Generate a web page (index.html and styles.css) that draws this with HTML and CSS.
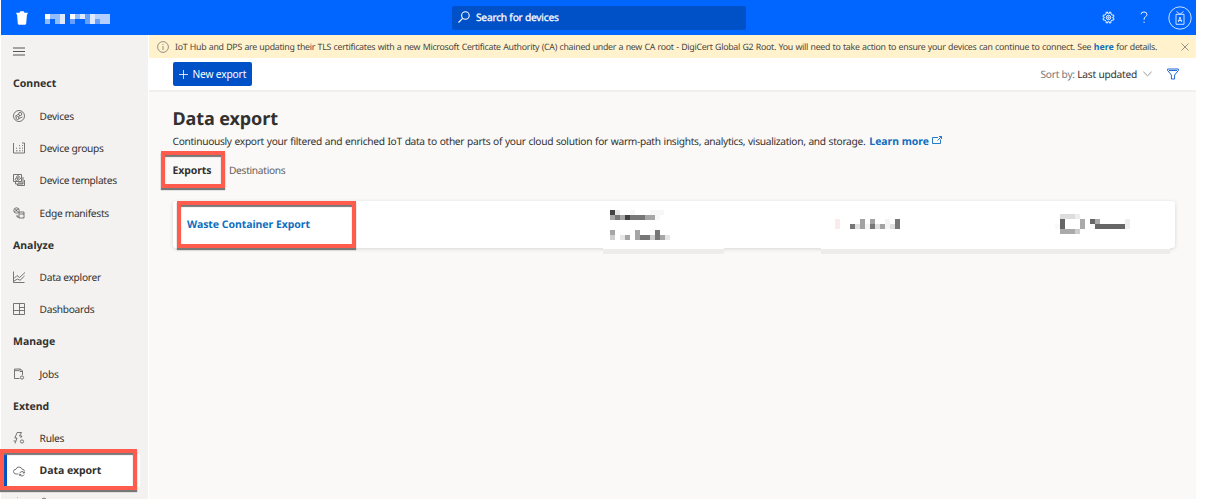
FILE: index.html
```
<!DOCTYPE html>
<html lang="en">
<head>
<meta charset="utf-8">
<title>Data export</title>
<link rel="stylesheet" href="styles.css">
</head>
<body>
<div class="app">
  <header class="topbar">
    <svg class="trash" viewBox="0 0 12 14"><path d="M.3 1.7h3.2L4.3.2h3.4l.8 1.5h3.2v1.5H.3zM1 3h10l-.8 9.5q-.1 1.3-1.3 1.3H3.1q-1.2 0-1.3-1.3z"/></svg>
    <svg class="brand" viewBox="0 0 13 2" shape-rendering="crispEdges">
      <path fill="#fff" d="M0 0h1v1H0zM5 0h1v1H5z"/><path fill="#91bcff" d="M1 0h2v1H1zM0 1h1v1H0zM6 0h1v1H6zM2 1h1v1H2z"/><path fill="#dce9ff" d="M3 0h1v1H3zM7 0h1v1H7zM9 0h1v1H9zM3 1h1v1H3zM9 1h1v1H9z"/><path fill="#66a0ff" d="M8 0h1v1H8zM5 1h1v1H5zM10 1h1v1h-1zM8 1h1v1H8z"/><path fill="#b5d0ff" d="M10 0h3v1h-3zM11 1h2v1h-2z"/>
    </svg>
    <div class="search">
      <svg class="i12" viewBox="0 0 12 12"><circle cx="7.4" cy="4.5" r="3.8"/><path d="M4.7 7.3.5 11.5"/></svg>
      <span>Search for devices</span>
    </div>
    <div class="actions">
      <svg class="gear" viewBox="0 0 14 14"><path d="m5.8 1 .3 1.5h1.8L8.2 1l1.6.6-.3 1.6 1.3 1.2 1.6-.2.6 1.7-1.4.7v.9l1.4.7-.6 1.7-1.6-.2-1.3 1.2.3 1.6-1.6.6-.3-1.5H6.1L5.8 13l-1.6-.5.3-1.6-1.3-1.2-1.6.2L1 8.200l1.400-.7v-.9L1 5.900l.6-1.700 1.600.2 1.300-1.200-.3-1.600z"/><circle cx="7" cy="7" r="2.400"/><circle cx="7" cy="7" r=".8"/></svg>
      <svg class="help" viewBox="0 0 8 14"><path d="M.8 3.500Q.9 1 4 1t3.200 2.700c0 2.300-3.100 2.600-3.100 5.200v.6M4.100 11.500v1.400"/></svg>
      <svg class="avatar" viewBox="0 0 24 24"><circle cx="12" cy="12" r="11.200"/><path d="M8 8.300h8v10H8zM8.500 5.500 12 8.300l3.500-2.800M10.300 16l1.700-5 1.700 5M10.500 14.500h3"/></svg>
    </div>
  </header>
  <div class="body">
    <nav class="sidebar">
      <svg class="menu" viewBox="0 0 12 9"><path d="M0 1h12M0 4.500h12M0 8h12"/></svg>
      <h2>Connect</h2>
      <a><svg viewBox="0 0 12 12"><circle cx="6" cy="6" r="5.500"/><circle cx="7.200" cy="4" r="1.600"/><circle cx="4.500" cy="8" r="1.500"/><path d="M2 6.500 5.700 4M5.800 8.500 9.500 7M7 5.500 5.500 6.800"/></svg><span>Devices</span></a>
      <a><svg viewBox="0 0 12 12"><path d="M.5 1v10h11V1H9M3 8.800h1.500M6 8.800h1.500M9 8.800h1M3 6.200h1M6 6.200h1.500M9 6.200h1M9 3.600h1M6 3.600h1"/></svg><span>Device groups</span></a>
      <a><svg viewBox="0 0 12 12"><path d="M.5.500h8v7h-8zM2.500 8v2h7.500V3M4.500 10v1.500h7V6"/><circle cx="5" cy="3" r="1.300"/><circle cx="3.500" cy="5.300" r="1.200"/><path d="M5 6.500 8 4M5 9h5"/></svg><span>Device templates</span></a>
      <a><svg viewBox="0 0 12 12"><circle cx="3.500" cy="3.500" r="2.700"/><path d="m1.500 4.500 4-2.500M2.500 2l2 3M6 5h5v6H6zM6.500 7H11M4 8v2h2"/></svg><span>Edge manifests</span></a>
      <h2>Analyze</h2>
      <a><svg viewBox="0 0 12 12"><path d="M.5.500v11h11M1 7.500l3-3 2.500 2L12 1.500M1 10l3.500-2L7 9.300 11.500 5"/></svg><span>Data explorer</span></a>
      <a><svg viewBox="0 0 12 12"><path d="M.5.500h11v11H.5zM6.500.500v11M.5 7.500h11M6.500 4.500h5"/></svg><span>Dashboards</span></a>
      <h2>Manage</h2>
      <a><svg viewBox="0 0 12 12"><path d="M6.500 10.500h-5V1h6l2 2v4M2 2.600h4M7 1v2.500h2.500"/><circle cx="9" cy="9.500" r="1.600"/></svg><span>Jobs</span></a>
      <h2>Extend</h2>
      <a><svg viewBox="0 0 12 12"><path d="M4.200.500h4.300L6.500 4H9L7.500 6M4.200.500 1.800 6H4L2 11.500M2.500 9H.5"/><circle cx="9" cy="9.500" r="1.600"/></svg><span>Rules</span></a>
      <a class="current"><svg viewBox="0 0 12 12"><path d="M5.500 9H3Q.5 8.800.5 6.500T3 4.300Q3.500 2 6 2t3 2.200q2.300 0 2.500 2"/><path d="M6.800 8.200Q7.300 6.500 9 6.500t2.200 1.500M11.300 6.500V8H9.800M11.200 9.500Q10.500 11 9 11t-2.200-1.500M6.700 11V9.500h1.500"/></svg><span>Data export</span></a>
      <a class="cut"><svg viewBox="0 0 12 12"><path d="M4 0h1"/></svg><span><svg viewBox="0 0 12 12"><path d="M2 2q2-2 4 0"/></svg></span></a>
    </nav>
    <main>
      <div class="banner">
        <svg class="i12" viewBox="0 0 12 12"><circle cx="6" cy="6" r="5.400"/><path d="M6 5v4M6 3v1"/></svg>
        <p>IoT Hub and DPS are updating their TLS certificates with a new Microsoft Certificate Authority (CA) chained under a new CA root - DigiCert Global G2 Root. You will need to take action to ensure your devices can continue to connect. See <b>here</b> for details.</p>
        <svg class="close" viewBox="0 0 8 8"><path d="m.5.500 7 7M7.500.500l-7 7"/></svg>
      </div>
      <div class="toolbar">
        <button><svg viewBox="0 0 9 9"><path d="M4.500 0v9M0 4.500h9"/></svg><span>New export</span></button>
        <div class="sort"><span>Sort by: <em>Last updated</em></span>
          <svg class="chev" viewBox="0 0 9 6"><path d="m.4.800 4.100 4 4.100-4"/></svg>
          <svg class="filter" viewBox="0 0 12 12"><path d="M.6 1h10.800v1.500L7.600 7v4H4.400V7L.6 2.500zM2 2.500h8"/></svg>
        </div>
      </div>
      <section class="content">
        <h1>Data export</h1>
        <p class="intro"><span>Continuously export your filtered and enriched IoT data to other parts of your cloud solution for warm-path insights, analytics, visualization, and storage.</span> <b>Learn more</b><svg viewBox="0 0 10 8"><path d="M6 1.500H.5v6h8V3.500M5.500 4.500l4-4M7 .5h2.500V3"/></svg></p>
        <div class="tabs"><b>Exports</b><span>Destinations</span></div>
        <div class="card">
          <a>Waste Container Export</a>
          <div class="field f1"><svg viewBox="0 0 60 30" shape-rendering="crispEdges">
            <path fill="#414141" d="M0 0h5v5H0zM15 5h5v5h-5z"/><path fill="#a6a6a6" d="M0 5h5v5H0zM10 5h5v5h-5zM35 5h10v5H35zM0 20h5v5H0zM15 25h5v5h-5zM25 20h5v5h-5zM25 25h5v5h-5z"/><path fill="#777" d="M5 5h5v5H5zM20 5h15v5H20zM30 25h10v5H30zM45 20h5v10h-5z"/><path fill="#e6e6e6" d="M5 0h5v5H5zM10 25h5v5h-5zM55 25h5v5h-5z"/><path fill="#f7f7f7" d="M20 0h5v5h-5zM40 0h14v5H40zM45 5h5v5h-5z"/><path fill="#cfcfcf" d="M0 25h5v5H0zM40 25h5v5h-5z"/><path fill="#a6a6a6" d="M50 25h5v5h-5z"/></svg></div>
          <div class="field f2"><svg viewBox="0 0 65 10" shape-rendering="crispEdges">
            <path fill="#faecec" d="M0 0h5v10H0z"/><path fill="#777" d="M15 5h5v5h-5zM60 0h5v10h-5zM35 5h5v5h-5z"/><path fill="#a2a2a2" d="M25 0h5v10h-5zM35 0h5v5h-5zM45 5h5v5h-5z"/><path fill="#e0e0e0" d="M20 5h5v5h-5zM40 5h5v5h-5zM55 5h5v5h-5z"/><path fill="#f4f4f4" d="M30 5h5v5h-5zM50 0h5v10h-5z"/></svg></div>
          <div class="field f3"><svg viewBox="0 0 75 20" shape-rendering="crispEdges">
            <path fill="#ddd" d="M5 0h15v5H5z"/><path fill="#eee" d="M20 0h5v5h-5zM70 5h5v10h-5z"/><path fill="#666" d="M5 5h5v10H5zM35 5h5v5h-5zM40 10h30v5H40z"/><path fill="#aaa" d="M5 15h15v5H5zM25 5h5v10h-5zM40 5h5v5h-5z"/><path fill="#ccc" d="M20 15h5v5h-5z"/><path fill="#f9f9f9" d="M0 10h5v5H0zM35 10h5v5h-5z"/></svg></div>
        </div>
      </section>
    </main>
  </div>
</div>
<div class="mark mark-nav"></div>
<div class="mark mark-tab"></div>
<div class="mark mark-row"></div>
</body>
</html>
```
FILE: styles.css
```
* { box-sizing: border-box; }
body { margin: 0; height: 499px; overflow: hidden; background: #fff; color: #323130; font: 10.2px/16px "Noto Sans", sans-serif; letter-spacing: -.3px; text-rendering: geometricPrecision; position: relative; }
h1, h2, p { margin: 0; }
svg { fill: none; stroke: currentColor; stroke-width: .8; flex: none; display: block; }
span, b, h1, a { white-space: nowrap; }
.app { margin-left: 1px; width: 1195px; height: 499px; display: flex; flex-direction: column; }
.topbar { height: 35px; flex: none; background: #0066ff; color: #fff; display: flex; align-items: center; }
.trash { width: 12px; height: 14px; margin-left: 15px; fill: #fff; stroke: none; }
.brand { width: 65px; height: 10px; margin: 3px 0 0 17px; stroke: none; }
.search { margin-left: 342px; width: 294px; height: 24px; border-radius: 2px; background: #0050c8; display: flex; align-items: center; gap: 6px; padding: 0 0 1px 6px; letter-spacing: -.22px; -webkit-text-stroke: .25px; }
.i12 { width: 12px; height: 12px; }
.search svg { stroke-width: 1.1; }
.actions { margin-left: auto; display: flex; align-items: center; padding-right: 4px; }
.gear { width: 13px; height: 13px; stroke-width: 1; }
.help { width: 8px; height: 13px; margin: 0 20px 0 25px; stroke-width: 1; }
.avatar { width: 24px; height: 24px; }
.body { flex: 1; min-height: 0; display: flex; }
.sidebar { width: 148px; flex: none; background: #f3f2f1; border-right: 1px solid #fff; overflow: hidden; }
.menu { width: 12px; height: 9px; margin: 12px 0 11.4px 12px; stroke-width: 1; color: #555; }
.sidebar h2 { height: 32.25px; padding: 1px 0 0 12px; font-size: 10.5px; line-height: 32.25px; font-weight: 700; letter-spacing: 0; }
.sidebar a { height: 32.25px; display: flex; align-items: center; padding: 0 0 0 12px; gap: 14.6px; }
.sidebar a svg { width: 12px; height: 12px; color: #555; }
.sidebar .current { width: 136px; background: #fff; font-size: 10.5px; font-weight: 700; letter-spacing: -.05px; border-left: 3px solid #0050c8; margin-left: 3px; padding: 1px 0 0 6px; }
.sidebar .cut { color: #555; }
main { flex: 1; min-width: 0; display: flex; flex-direction: column; background: #faf9f8; }
.banner { height: 23px; flex: none; background: #fff2cc; display: flex; align-items: center; padding: 0 7px 0 8px; font-size: 8.8px; letter-spacing: -.28px; word-spacing: .45px; color: #484644; }
.banner p { margin-left: 6px; white-space: nowrap; }
.banner b, .intro b { color: #106ebe; letter-spacing: 0; }
.banner svg { color: #777; }
.banner .close { width: 8px; height: 8px; margin-left: auto; }
.toolbar { height: 34px; flex: none; background: #fff; border-bottom: 2px solid #f0efee; display: flex; align-items: center; padding: 0 17px 0 23.5px; }
button { width: 79px; height: 24px; border: 0; border-radius: 2px; background: #0050c8; color: #fff; font: inherit; letter-spacing: -.15px; padding: 0 0 0 6px; display: flex; align-items: center; gap: 5px; }
button svg { width: 9px; height: 9px; }
.sort { margin-left: auto; display: flex; align-items: center; color: #777; letter-spacing: -.23px; }
.sort em { font-style: normal; color: #323130; }
.chev { width: 9px; height: 6px; margin: 0 15px 0 6px; }
.filter { width: 12px; height: 12px; color: #2166d2; stroke-width: 1; }
.content { padding: 15px 21px 0 23.5px; }
h1 { font-size: 18px; line-height: 24px; letter-spacing: -.1px; }
.intro { height: 16px; margin-top: 2px; display: flex; align-items: center; }
.intro span { margin-right: 4px; letter-spacing: -.31px; word-spacing: .5px; }
.intro b { font-size: 10.4px; padding-top: 1px; }
.intro svg { width: 10px; height: 8px; margin: -2px 0 0 3px; color: #106ebe; stroke-width: .9; }
.tabs { display: flex; gap: 17.5px; height: 24px; margin-top: 9px; line-height: 24px; color: #605e5c; }
.tabs b { color: #323130; height: 28px; padding-top: 1px; border-bottom: 1px solid #58627d; font-size: 10.5px; letter-spacing: -.1px; }
.card { height: 47px; margin-top: 19px; background: #fff; border-radius: 3px; box-shadow: 0 1px 4px rgba(0,0,0,.14); display: grid; grid-template-columns: 430.5px 218px 220px 1fr; }
.card a { padding-left: 14.5px; line-height: 48px; height: 47px; font-size: 10.5px; font-weight: 700; letter-spacing: -.05px; color: #106ebe; }
.field svg { stroke: none; }
.field { background: #fff; height: 53px; border-bottom: 5px solid #edecea; }
.f1 { width: 121px; padding: 9px 0 0 7px; }
.f1 svg { width: 60px; height: 30px; }
.f2 { padding: 18px 0 0 14px; }
.f2 svg { width: 65px; height: 10px; }
.f3 { width: 129px; padding: 13px 0 0 14px; }
.f3 svg { width: 75px; height: 20px; }
.f2, .f3 { width: auto; }
.f3 { margin-right: 5px; }
.mark { position: absolute; border: 4px solid #ff5c4d; box-shadow: 0 2px 1px #777, inset 0 2px 1px #777; }
.mark-nav { left: 0; top: 449px; width: 137px; height: 41px; }
.mark-tab { left: 161px; top: 151px; width: 64px; height: 37px; }
.mark-row { left: 177px; top: 201px; width: 179px; height: 47px; }
```
